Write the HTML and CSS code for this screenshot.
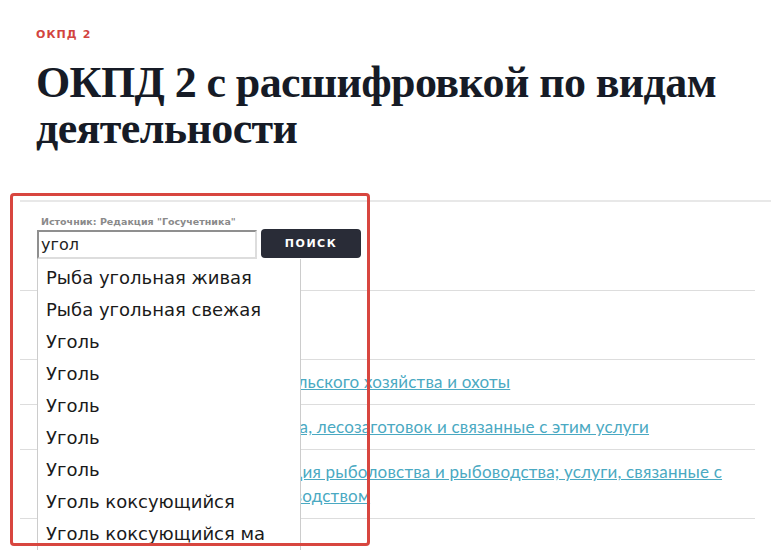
FILE: index.html
```html
<!DOCTYPE html>
<html lang="ru">
<head>
    <meta charset="UTF-8">
    <meta name="viewport" content="width=device-width, initial-scale=1.0">
    <title>ОКПД 2 с расшифровкой по видам деятельности</title>
    <link rel="stylesheet" href="styles.css">
</head>
<body>
    <header class="page-head">
        <div class="eyebrow">ОКПД 2</div>
        <h1 class="title">ОКПД 2 с расшифровкой по видам деятельности</h1>
    </header>

    <section class="catalog">
        <form class="search-form" onsubmit="return false">
            <div class="source">Источник: Редакция "Госучетника"</div>
            <div class="search-row">
                <div class="search-field">
                    <input class="search-input" type="text" value="угол">
                    <ul class="suggest">
                        <li>Рыба угольная живая</li>
                        <li>Рыба угольная свежая</li>
                        <li>Уголь</li>
                        <li>Уголь</li>
                        <li>Уголь</li>
                        <li>Уголь</li>
                        <li>Уголь</li>
                        <li>Уголь коксующийся</li>
                        <li>Уголь коксующийся ма</li>
                    </ul>
                </div>
                <button class="search-button">Поиск</button>
            </div>
        </form>

        <table class="codes-table">
            <thead>
                <tr>
                    <th class="col-code">Код</th>
                    <th>Наименование</th>
                </tr>
            </thead>
            <tbody>
                <tr>
                    <td class="col-code">01</td>
                    <td><a href="#">Продукция и услуги сельского хозяйства и охоты</a></td>
                </tr>
                <tr>
                    <td class="col-code">02</td>
                    <td><a href="#">Продукция лесоводства, лесозаготовок и связанные с этим услуги</a></td>
                </tr>
                <tr>
                    <td class="col-code">03</td>
                    <td><a href="#">Рыба и прочая продукция рыболовства и рыбоводства; услуги, связанные с рыболовством и рыбоводством</a></td>
                </tr>
                <tr>
                    <td class="col-code">05</td>
                    <td><a href="#">Уголь</a></td>
                </tr>
            </tbody>
        </table>

        <div class="highlight"></div>
    </section>
</body>
</html>
```

FILE: styles.css
```css
* {
    margin: 0;
    padding: 0;
    box-sizing: border-box;
}

body {
    background-color: #fff;
    color: #1b1f29;
    font-family: 'DejaVu Sans', Verdana, sans-serif;
    overflow: hidden;
}

.page-head {
    padding: 28px 36px 0;
}

.eyebrow {
    color: #d2433e;
    font-size: 11px;
    font-weight: bold;
    letter-spacing: 1.1px;
    text-transform: uppercase;
    line-height: 14px;
}

.title {
    margin-top: 18px;
    font-family: 'Liberation Serif', 'Times New Roman', serif;
    font-size: 44px;
    font-weight: bold;
    letter-spacing: -0.6px;
    line-height: 46px;
    color: #161b26;
}

.catalog {
    position: relative;
    margin: 48px 13px 0 20px;
    border-top: 2px solid #e8e8e8;
}

.search-form {
    padding: 13px 0 0 17px;
}

.source {
    padding-left: 4px;
    font-size: 9.5px;
    font-weight: bold;
    color: #8a8a8a;
    line-height: 14px;
}

.search-row {
    display: flex;
    align-items: flex-start;
    gap: 4px;
}

.search-field {
    position: relative;
}

.search-input {
    display: block;
    width: 220px;
    height: 29px;
    margin-top: 1px;
    padding: 0 2px;
    border: 2px solid #ddd;
    border-top-color: #8f8f8f;
    border-left-color: #8f8f8f;
    font-family: 'DejaVu Sans', Verdana, sans-serif;
    font-size: 16px;
    color: #222;
    outline: none;
}

.suggest {
    position: absolute;
    top: 100%;
    left: 0;
    z-index: 2;
    width: 264px;
    padding: 3px 0 8px;
    list-style: none;
    background-color: #fff;
    border-left: 1px solid #ccc;
    border-right: 1px solid #ccc;
}

.suggest li {
    height: 32px;
    padding-left: 8px;
    font-size: 18px;
    line-height: 32px;
    color: #1a1a1a;
    white-space: nowrap;
    overflow: hidden;
}

.search-button {
    width: 100px;
    height: 29px;
    background-color: #292c37;
    color: #fff;
    border: none;
    border-radius: 4px;
    font-family: 'DejaVu Sans', Verdana, sans-serif;
    font-size: 11px;
    font-weight: bold;
    letter-spacing: 1.5px;
    text-transform: uppercase;
    cursor: pointer;
}

.codes-table {
    width: 735px;
    margin-top: 31px;
    border-collapse: collapse;
    table-layout: fixed;
    font-family: Lato, 'Open Sans', sans-serif;
    font-size: 17px;
    letter-spacing: 0.2px;
}

.codes-table th,
.codes-table td {
    border-top: 1px solid #ddd;
    text-align: left;
    vertical-align: middle;
    line-height: 24px;
    padding: 10px 10px 10px 0;
}

.codes-table th {
    height: 69px;
    font-weight: bold;
    color: #333;
}

.codes-table .col-code {
    width: 94px;
    padding-left: 40px;
}

.codes-table a {
    color: #4aa9c2;
}

.highlight {
    position: absolute;
    left: -10px;
    top: -9px;
    width: 360px;
    height: 353px;
    border: 3px solid #d8463f;
    border-radius: 4px;
    z-index: 3;
    pointer-events: none;
}
```
